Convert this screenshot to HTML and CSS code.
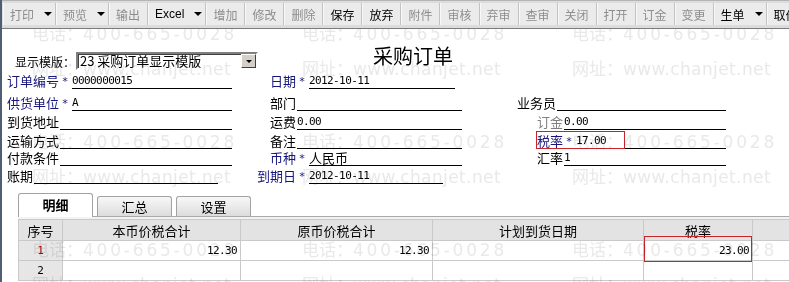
FILE: index.html
```html
<!DOCTYPE html>
<html>
<head>
    <title>采购订单</title>
    <link rel="stylesheet" href="styles.css">
</head>
<body>

<div class="win">
    <div class="toolbar">
        <span class="tb">打印<i class="caret"></i></span>
        <span class="tb">预览<i class="caret"></i></span>
        <span class="tb">输出</span>
        <span class="tb on latin">Excel<i class="caret"></i></span>
        <span class="tb">增加</span>
        <span class="tb">修改</span>
        <span class="tb">删除</span>
        <span class="tb on">保存</span>
        <span class="tb on">放弃</span>
        <span class="tb">附件</span>
        <span class="tb">审核</span>
        <span class="tb">弃审</span>
        <span class="tb">查审</span>
        <span class="tb">关闭</span>
        <span class="tb">打开</span>
        <span class="tb">订金</span>
        <span class="tb">变更</span>
        <span class="tb on">生单<i class="caret"></i></span>
        <span class="tb on">取价</span>
    </div>

    <div class="sheet">
        <div class="head">
            <div class="tpl">
                <label>显示模版：</label>
                <div class="select">
                    <span>23 采购订单显示模版</span>
                    <b class="sel-btn"><i class="caret"></i></b>
                </div>
            </div>
            <h1>采购订单</h1>
        </div>

        <div class="form">
            <!-- row 1 -->
            <div class="fld c1"><span class="lbl must">订单编号</span><span class="req">*</span><span class="val num">0000000015</span></div>
            <div class="fld c2 end-455"><span class="lbl must">日期</span><span class="req">*</span><span class="val num">2012-10-11</span></div>
            <div class="fld c3"></div>
            <!-- row 2 -->
            <div class="fld c1"><span class="lbl must">供货单位</span><span class="req">*</span><span class="val num">A</span></div>
            <div class="fld c2"><span class="lbl">部门</span><span class="val"></span></div>
            <div class="fld c3"><span class="lbl narrow">业务员</span><span class="val"></span></div>
            <!-- row 3 -->
            <div class="fld c1"><span class="lbl">到货地址</span><span class="val"></span></div>
            <div class="fld c2"><span class="lbl">运费</span><span class="val num">0.00</span></div>
            <div class="fld c3"><span class="lbl off">订金</span><span class="val num">0.00</span></div>
            <!-- row 4 -->
            <div class="fld c1"><span class="lbl">运输方式</span><span class="val"></span></div>
            <div class="fld c2"><span class="lbl">备注</span><span class="val"></span></div>
            <div class="fld c3"><span class="lbl must">税率</span><span class="req">*</span><span class="val num">17.00</span><span class="mark tax-mark"></span></div>
            <!-- row 5 -->
            <div class="fld c1"><span class="lbl">付款条件</span><span class="val"></span></div>
            <div class="fld c2"><span class="lbl must">币种</span><span class="req">*</span><span class="val">人民币</span></div>
            <div class="fld c3"><span class="lbl">汇率</span><span class="val num">1</span></div>
            <!-- row 6 -->
            <div class="fld c1 end-218"><span class="lbl">账期</span><span class="val"></span></div>
            <div class="fld c2 end-443"><span class="lbl must">到期日</span><span class="req">*</span><span class="val num">2012-10-11</span></div>
            <div class="fld c3"></div>
        </div>

        <div class="tabs">
            <span class="tab on">明细</span>
            <span class="tab">汇总</span>
            <span class="tab">设置</span>
        </div>

        <div class="panel">
            <table class="grid">
                <colgroup>
                    <col style="width:44px">
                    <col style="width:178px">
                    <col style="width:192px">
                    <col style="width:211px">
                    <col style="width:109px">
                    <col style="width:66px">
                </colgroup>
                <tr>
                    <th>序号</th>
                    <th>本币价税合计</th>
                    <th>原币价税合计</th>
                    <th>计划到货日期</th>
                    <th>税率</th>
                    <th></th>
                </tr>
                <tr>
                    <td class="no cur">1</td>
                    <td class="amt">12.30</td>
                    <td class="amt">12.30</td>
                    <td></td>
                    <td class="amt boxed">23.00<span class="mark cell-mark"></span></td>
                    <td></td>
                </tr>
                <tr>
                    <td class="no">2</td>
                    <td></td>
                    <td></td>
                    <td></td>
                    <td></td>
                    <td></td>
                </tr>
            </table>
        </div>

        <!-- watermark printed over the page -->
        <div class="wm">
            <div class="wm-tile"><div><span class="wm-k">电话：</span><span class="wm-num">400-665-0028</span></div><div><span class="wm-k">网址：</span><span class="wm-url">www.chanjet.net</span></div></div>
            <div class="wm-tile"><div><span class="wm-k">电话：</span><span class="wm-num">400-665-0028</span></div><div><span class="wm-k">网址：</span><span class="wm-url">www.chanjet.net</span></div></div>
            <div class="wm-tile"><div><span class="wm-k">电话：</span><span class="wm-num">400-665-0028</span></div><div><span class="wm-k">网址：</span><span class="wm-url">www.chanjet.net</span></div></div>
            <div class="wm-tile"><div><span class="wm-k">电话：</span><span class="wm-num">400-665-0028</span></div><div><span class="wm-k">网址：</span><span class="wm-url">www.chanjet.net</span></div></div>
            <div class="wm-tile"><div><span class="wm-k">电话：</span><span class="wm-num">400-665-0028</span></div><div><span class="wm-k">网址：</span><span class="wm-url">www.chanjet.net</span></div></div>
            <div class="wm-tile"><div><span class="wm-k">电话：</span><span class="wm-num">400-665-0028</span></div><div><span class="wm-k">网址：</span><span class="wm-url">www.chanjet.net</span></div></div>
            <div class="wm-tile"><div><span class="wm-k">电话：</span><span class="wm-num">400-665-0028</span></div><div><span class="wm-k">网址：</span><span class="wm-url">www.chanjet.net</span></div></div>
            <div class="wm-tile"><div><span class="wm-k">电话：</span><span class="wm-num">400-665-0028</span></div><div><span class="wm-k">网址：</span><span class="wm-url">www.chanjet.net</span></div></div>
            <div class="wm-tile"><div><span class="wm-k">电话：</span><span class="wm-num">400-665-0028</span></div><div><span class="wm-k">网址：</span><span class="wm-url">www.chanjet.net</span></div></div>
        </div>
    </div>
</div>

</body>
</html>
```

FILE: styles.css
```css
* {
    box-sizing: border-box;
}
body {
    margin: 0;
    font-family: "Noto Sans CJK SC", sans-serif;
    font-size: 13px;
    color: #000;
    background-color: #fff;
    overflow: hidden;
}
.win {
    width: 789px;
    height: 282px;
    border-left: 2px solid #4f5d75;
    overflow: hidden;
}

/* toolbar */
.toolbar {
    display: flex;
    height: 29px;
    padding: 2px 0 0 1px;
    background-color: #dcdcdc;
    border-top: 1px solid #b4b4b4;
    border-bottom: 1px solid #7c7c7c;
    white-space: nowrap;
}
.tb {
    display: flex;
    align-items: center;
    height: 22px;
    padding: 0 7px 0 6px;
    background-color: #ebebeb;
    border-left: 1px solid #f8f8f8;
    border-right: 1px solid #c2c2c2;
    font-size: 12px;
    color: #8d8d8d;
    flex-shrink: 0;
}
.tb.on {
    color: #000;
}
.tb.latin {
    font-family: "Liberation Sans", sans-serif;
    font-size: 12px;
}
.tb .caret {
    margin-left: 10px;
    margin-right: -4px;
}
.caret {
    display: inline-block;
    width: 0;
    height: 0;
    border-left: 4px solid transparent;
    border-right: 4px solid transparent;
    border-top: 4px solid #000;
}

/* sheet */
.sheet {
    position: relative;
    height: 253px;
    overflow: hidden;
}
.head {
    display: flex;
    align-items: flex-end;
    height: 42px;
}
.tpl {
    display: flex;
    align-items: center;
    padding-left: 13px;
    margin-bottom: 1px;
}
.tpl label {
    font-size: 12px;
    margin-right: 1px;
}
.select {
    display: flex;
    align-items: center;
    width: 182px;
    height: 18px;
    padding-left: 2px;
    border: 2px solid;
    border-color: #808080 #fff #fff #808080;
    box-shadow: inset 1px 1px #404040;
}
.select span {
    flex: 1;
    font-size: 13px;
    line-height: 14px;
}
.sel-btn {
    display: flex;
    align-items: center;
    justify-content: center;
    width: 15px;
    height: 14px;
    background-color: #d4d0c8;
    border: 1px solid;
    border-color: #fff #404040 #404040 #fff;
}
.sel-btn .caret {
    border-left-width: 3px;
    border-right-width: 3px;
    border-top-width: 3px;
}
h1 {
    margin: 0 0 3px 115px;
    font-size: 20px;
    font-weight: normal;
    line-height: 24px;
}

/* header fields */
.form {
    display: grid;
    grid-template-columns: 238px 260px 289px;
    grid-template-rows: 18px 22px 19px 19px 17px 18px;
}
.fld {
    position: relative;
    display: flex;
    align-items: flex-end;
}
.c1 {
    padding-left: 5px;
    padding-right: 8px;
}
.c2 {
    padding-right: 38px;
}
.c3 {
    padding-right: 63px;
}
.c1.end-218 {
    padding-right: 22px;
}
.c2.end-455 {
    padding-right: 45px;
}
.c2.end-443 {
    padding-right: 57px;
}
.lbl {
    line-height: 15px;
    white-space: nowrap;
    padding-bottom: 1px;
}
.c2 .lbl {
    width: 56px;
    text-align: right;
}
.c3 .lbl {
    width: 63px;
    text-align: right;
}
.c3 .lbl.narrow {
    width: 56px;
}
.lbl.must,
.req {
    color: #16167c;
}
.lbl.off {
    color: #808080;
}
.req {
    width: 12px;
    text-align: center;
    font-family: "DejaVu Sans Mono", monospace;
    font-size: 11px;
    line-height: 12px;
    padding-bottom: 1px;
}
.val {
    flex: 1;
    height: 16px;
    margin-left: 1px;
    border-bottom: 1px solid #000;
    line-height: 15px;
    white-space: nowrap;
}
.num {
    font-family: "DejaVu Sans Mono", monospace;
    font-size: 11px;
    letter-spacing: -0.6px;
}
.mark {
    position: absolute;
    border: 1px solid #c8242a;
    pointer-events: none;
}
.tax-mark {
    left: 36px;
    top: 1px;
    width: 89px;
    height: 18px;
}

/* tabs */
.tabs {
    display: flex;
    align-items: flex-end;
    height: 32px;
    padding-left: 16px;
}
.tab {
    width: 75px;
    height: 20px;
    margin-right: 4px;
    border: 1px solid #a2a2a2;
    border-bottom: 0;
    border-radius: 3px 3px 0 0;
    background: linear-gradient(#f8f8f8, #dcdcdc);
    text-align: center;
    line-height: 19px;
}
.tab.on {
    position: relative;
    z-index: 1;
    height: 24px;
    margin-bottom: -1px;
    background: #fff;
    font-weight: bold;
    line-height: 22px;
}

/* detail grid */
.panel {
    height: 40px;
    margin-left: 16px;
    padding-top: 2px;
    border-top: 1px solid #a9a9a9;
    background-color: #f3f3f3;
}
.grid {
    border-collapse: collapse;
    table-layout: fixed;
    width: 800px;
}
.grid th,
.grid td {
    height: 20px;
    padding: 0 3px;
    border: 1px solid #c9c9c9;
    font-size: 13px;
    white-space: nowrap;
    overflow: hidden;
}
.grid th {
    height: 21px;
    background-color: #e3e3e3;
    font-weight: normal;
    text-align: center;
}
.grid td {
    background-color: #fff;
}
.grid td.no {
    background-color: #e6e6e6;
    text-align: center;
    font-family: "DejaVu Sans Mono", monospace;
    font-size: 11px;
}
.grid td.cur {
    color: #c00000;
}
.grid td.amt {
    text-align: right;
    font-family: "DejaVu Sans Mono", monospace;
    font-size: 11px;
    letter-spacing: -0.6px;
}
.grid td.boxed {
    position: relative;
    overflow: visible;
}
.cell-mark {
    left: 0;
    right: 0;
    top: -5px;
    bottom: -2px;
}

/* watermark */
.wm {
    position: absolute;
    top: -13px;
    left: 30px;
    z-index: 5;
    display: flex;
    flex-wrap: wrap;
    width: 810px;
    color: #e9e9e9;
    font-family: "DejaVu Sans", sans-serif;
    font-size: 17px;
    mix-blend-mode: multiply;
    pointer-events: none;
}
.wm-tile {
    width: 270px;
    height: 108px;
    line-height: 34px;
    white-space: nowrap;
}
.wm-k {
    display: inline-block;
    width: 51px;
    font-family: "Noto Sans CJK SC", sans-serif;
    font-size: 17px;
}
.wm-num {
    letter-spacing: 2.8px;
}
.wm-url {
    letter-spacing: 0.4px;
}
```
